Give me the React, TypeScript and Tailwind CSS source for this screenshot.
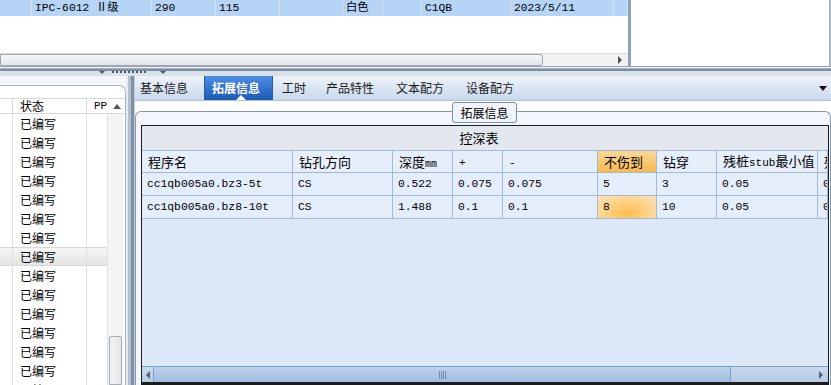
import React from 'react';

const MONO = "font-['Liberation_Mono','Noto_Sans_CJK_SC',monospace]";
const CJK = "font-['Noto_Sans_CJK_SC',sans-serif]";

const topCols = [
  { w: 32, t: '' },
  { w: 120, t: 'IPC-6012 Ⅱ级' },
  { w: 64, t: '290' },
  { w: 64, t: '115' },
  { w: 63, t: '' },
  { w: 40, t: '白色' },
  { w: 39, t: '' },
  { w: 89, t: 'C1QB' },
  { w: 103, t: '2023/5/11' },
  { w: 14, t: '' },
];

const tabs = [
  { t: '基本信息', w: 69, pl: 5 },
  { t: '拓展信息', w: 69, pl: 7, active: true },
  { t: '工时', w: 46, pl: 9 },
  { t: '产品特性', w: 70, pl: 7 },
  { t: '文本配方', w: 70, pl: 7 },
  { t: '设备配方', w: 70, pl: 7 },
];

const colW = [151, 100, 60, 50, 95, 59, 60, 101, 10];

const headers: React.ReactNode[] = [
  '程序名',
  '钻孔方向',
  <>深度<span className={`${MONO} text-[10px]`}>mm</span></>,
  <span className={`${MONO} text-[11px]`}>+</span>,
  <span className={`${MONO} text-[11px]`}>-</span>,
  '不伤到',
  '钻穿',
  <>残桩<span className={`${MONO} text-[11px]`}>stub</span>最小值</>,
  '残桩',
];

const rows = [
  ['cc1qb005a0.bz3-5t', 'CS', '0.522', '0.075', '0.075', '5', '3', '0.05', '0.05'],
  ['cc1qb005a0.bz8-10t', 'CS', '1.488', '0.1', '0.1', '8', '10', '0.05', '0.05'],
];

const statusRows = Array.from({ length: 15 }, (_, i) => i);

export default function App() {
  return (
    <div className="w-[831px] h-[385px] overflow-hidden bg-white flex flex-col text-black">
      {/* 上方列表 */}
      <div className="h-[66px] flex">
        <div className="w-[628px] flex flex-col">
          <div className="h-[16px] flex bg-[#b5d4f6]">
            {topCols.map((c, i) => (
              <div
                key={i}
                style={{ width: c.w }}
                className={`h-full flex items-center pl-[3px] border-r border-[#cfe2f8] ${MONO} text-[11.3px] whitespace-nowrap overflow-hidden`}
              >
                {c.t}
              </div>
            ))}
          </div>
          <div className="flex-1 bg-white" />
          <div className="h-[13px] flex bg-[#f1f1f1] border-t border-[#d9d9d9]">
            <div className="w-[543px] h-full bg-gradient-to-b from-[#f6f7f9] to-[#e2e5e9] border border-[#a3a8b0] rounded-r-[3px]" />
            <div className="flex-1 flex items-center justify-end pr-[6px]">
              <div className="w-0 h-0 border-y-[4px] border-y-transparent border-l-[4px] border-l-[#505050]" />
            </div>
          </div>
        </div>
        <div className="w-[3px] bg-[#8fa2ba]" />
        <div className="flex-1 bg-white border-r-2 border-[#a8b4c4]" />
      </div>

      {/* 分隔条 */}
      <div className="h-[10px] flex flex-col">
        <div className="h-[1px] bg-[#97a4b5]" />
        <div className="h-[1px] bg-[#eef1f5]" />
        <div className="h-[1px] bg-[#a9b4c2]" />
        <div className="h-[2px] bg-[#7f8c9e]" />
        <div className="h-[5px] bg-[#d9e1eb] flex items-start pl-[99px]">
          <div className="w-0 h-0 border-x-[3px] border-x-transparent border-t-[3px] border-t-[#4a5a70]" />
          <div className="ml-[7px] w-[36px] h-[2px] bg-[repeating-linear-gradient(90deg,#4a5a70_0px,#4a5a70_2px,transparent_2px,transparent_4px)]" />
          <div className="ml-[12px] w-0 h-0 border-x-[3px] border-x-transparent border-t-[3px] border-t-[#4a5a70]" />
        </div>
      </div>

      {/* 下方区域 */}
      <div className="flex-1 flex min-h-0">
        {/* 左侧状态列表 */}
        <div className="w-[126px] bg-[#f3f6fa] pt-[9px] flex flex-col">
          <div className="flex-1 bg-white border-t border-r border-[#aab5c4] rounded-tr-[7px] flex flex-col pt-[12px] overflow-hidden">
            <div className={`h-[16px] flex border-y border-[#d6dade] ${CJK} text-[12px]`}>
              <div className="w-[13px] border-r border-[#d6dade]" />
              <div className="w-[74px] border-r border-[#d6dade] pl-[7px] flex items-center">状态</div>
              <div className={`flex-1 flex items-center pl-[7px] ${MONO} text-[11px]`}>
                PP
                <span className="ml-[6px] w-0 h-0 border-x-[4px] border-x-transparent border-b-[5px] border-b-[#555]" />
              </div>
            </div>
            <div className="flex-1 flex min-h-0">
              <div className="w-[107px] flex flex-col">
                {statusRows.map((i) => (
                  <div
                    key={i}
                    className={`h-[19px] shrink-0 flex ${CJK} text-[12px] ${i === 7 ? 'bg-gradient-to-b from-[#f6f6f6] to-[#e4e4e4] border-y border-[#d8d8d8]' : ''}`}
                  >
                    <div className="w-[13px] border-r border-[#dcdfe3]" />
                    <div className="w-[74px] border-r border-[#dcdfe3] pl-[7px] flex items-center">已编写</div>
                    <div className="flex-1" />
                  </div>
                ))}
              </div>
              <div className="w-[16px] bg-[#f4f4f4] border-l border-[#e2e2e2] flex flex-col pt-[222px] px-[1px]">
                <div className="flex-1 bg-gradient-to-r from-[#f2f3f5] to-[#e3e6ea] border border-[#a8adb4] rounded-t-[2px]" />
              </div>
            </div>
          </div>
        </div>

        {/* 竖向分隔条 */}
        <div className="w-[9px] flex">
          <div className="w-[2px] bg-[#e6ebf1]" />
          <div className="w-[3px] bg-[#b3bfcd]" />
          <div className="w-[3px] bg-[#7f90a6]" />
          <div className="w-[1px] bg-[#c3cedb]" />
        </div>

        {/* 右侧选项卡 */}
        <div className="flex-1 flex flex-col min-w-0">
          <div className={`h-[25px] flex bg-gradient-to-b from-[#eef3fa] to-[#c8d8ec] border-b border-[#b2c3d8] ${CJK} text-[12px]`}>
            {tabs.map((tb) => (
              <div
                key={tb.t}
                style={{ width: tb.w, paddingLeft: tb.pl }}
                className={`relative h-full flex items-center whitespace-nowrap ${
                  tb.active
                    ? 'bg-gradient-to-b from-[#4d8de2] to-[#1c5bb5] text-white font-bold border-x border-[#2a5f9e]'
                    : 'text-[#1a1a1a]'
                }`}
              >
                {tb.t}
                {tb.active && (
                  <div className="absolute bottom-0 left-[31px] w-0 h-0 border-x-[5px] border-x-transparent border-b-[5px] border-b-white" />
                )}
              </div>
            ))}
            <div className="flex-1 flex items-center justify-end pr-[4px]">
              <div className="w-0 h-0 border-x-[4px] border-x-transparent border-t-[5px] border-t-[#111]" />
            </div>
          </div>

          <div className="flex-1 bg-white pt-[10px] flex flex-col min-h-0">
            <div className="relative flex-1 flex flex-col border-t border-x border-[#8597ad] rounded-t-[6px] bg-[#f3f7fd] pl-[5px] pr-[1px] pt-[13px] min-h-0">
              <div className={`absolute top-[-10px] left-[316px] w-[65px] h-[21px] flex items-center justify-center bg-[#f1f5fb] border border-[#7d8fa7] rounded-[3px] ${CJK} text-[12px]`}>
                拓展信息
              </div>

              {/* 控深表 */}
              <div className="flex-1 flex flex-col border-x border-t border-b-[3px] border-[#1c1c1c] bg-[#dde9f8] overflow-hidden min-h-0">
                <div className={`h-[25px] shrink-0 flex items-center justify-center pr-[12px] bg-[#e3e8f0] border-b border-[#a9b9cd] ${CJK} text-[13px]`}>
                  控深表
                </div>
                <div className={`h-[22px] shrink-0 flex bg-[#e6eefa] border-b border-[#a6b9d3] ${CJK} text-[13px]`}>
                  {headers.map((h, i) => (
                    <div
                      key={i}
                      style={{ width: colW[i] }}
                      className={`shrink-0 h-full flex items-center pl-[6px] border-r border-[#a6b9d3] whitespace-nowrap overflow-hidden ${
                        i === 5 ? 'bg-gradient-to-b from-[#fbd897] to-[#f5b84c]' : ''
                      }`}
                    >
                      <span>{h}</span>
                    </div>
                  ))}
                </div>
                {rows.map((r, ri) => (
                  <div key={ri} className={`h-[23px] shrink-0 flex bg-[#e4eefb] border-b border-[#a6b9d3] ${MONO} text-[11.3px]`}>
                    {r.map((c, ci) => (
                      <div
                        key={ci}
                        style={{ width: colW[ci] }}
                        className={`shrink-0 h-full flex items-center pl-[5px] border-r border-[#a6b9d3] whitespace-nowrap overflow-hidden ${
                          ri === 1 && ci === 5
                            ? 'bg-[radial-gradient(ellipse_at_50%_80%,#fdbd50_0%,#fdd48c_55%,#f9e2c2_100%)]'
                            : ''
                        }`}
                      >
                        {c}
                      </div>
                    ))}
                  </div>
                ))}
                <div className="flex-1" />

                {/* 水平滚动条 */}
                <div className="h-[16px] shrink-0 flex bg-gradient-to-b from-[#c9daef] to-[#b4c9e4] border-t border-[#7f9cc1]">
                  <div className="w-[11px] flex items-center justify-center">
                    <div className="w-0 h-0 border-y-[4px] border-y-transparent border-r-[4px] border-r-[#55606e]" />
                  </div>
                  <div className="w-[578px] h-full flex items-center justify-center bg-gradient-to-b from-[#bcd1ec] to-[#a3bde0] border-x border-[#7f9cc1] rounded-[2px]">
                    <div className="flex gap-[1px]">
                      <div className="w-[1px] h-[8px] bg-[#6f8bb0]" />
                      <div className="w-[1px] h-[8px] bg-[#6f8bb0]" />
                      <div className="w-[1px] h-[8px] bg-[#6f8bb0]" />
                      <div className="w-[1px] h-[8px] bg-[#6f8bb0]" />
                    </div>
                  </div>
                  <div className="flex-1" />
                  <div className="w-[15px] flex items-center justify-center">
                    <div className="w-0 h-0 border-y-[4px] border-y-transparent border-l-[4px] border-l-[#55606e]" />
                  </div>
                </div>
              </div>
            </div>
          </div>
        </div>
      </div>
    </div>
  );
}
